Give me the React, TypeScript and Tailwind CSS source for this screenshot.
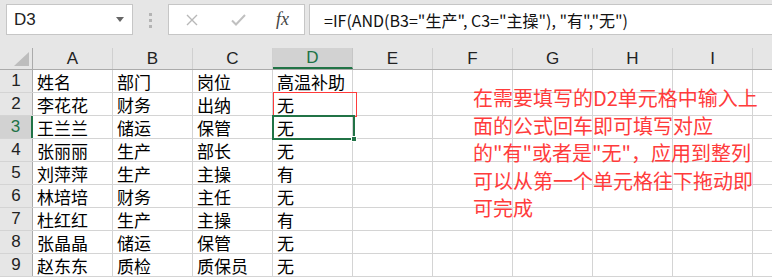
const cols = ["A", "B", "C", "D", "E", "F", "G", "H", "I", ""];

const rows: string[][] = [
  ["姓名", "部门", "岗位", "高温补助"],
  ["李花花", "财务", "出纳", "无"],
  ["王兰兰", "储运", "保管", "无"],
  ["张丽丽", "生产", "部长", "无"],
  ["刘萍萍", "生产", "主操", "有"],
  ["林培培", "财务", "主任", "无"],
  ["杜红红", "生产", "主操", "有"],
  ["张晶晶", "储运", "保管", "无"],
  ["赵东东", "质检", "质保员", "无"],
];

const note = [
  "在需要填写的D2单元格中输入上",
  "面的公式回车即可填写对应",
  "的\"有\"或者是\"无\"，应用到整列",
  "可以从第一个单元格往下拖动即",
  "可完成",
];

const cjk = "font-['Noto_Sans_CJK_SC','Noto_Sans',sans-serif]";

function TopBar() {
  return (
    <div className="flex h-[48px] items-start bg-[#e6e6e6] pt-[4px]">
      <div className="ml-[6px] flex h-[31px] w-[127px] items-center justify-between border border-[#c6c6c6] bg-white pl-[7px] pr-[8px]">
        <span className="font-['Liberation_Sans',sans-serif] text-[17px] text-[#222]">D3</span>
        <svg width="8" height="5" viewBox="0 0 8 5">
          <path d="M0 0h8L4 5z" fill="#666" />
        </svg>
      </div>
      <div className="ml-[16px] mt-[9px] flex flex-col gap-[3px]">
        <div className="h-[3px] w-[3px] bg-[#b4b4b4]" />
        <div className="h-[3px] w-[3px] bg-[#b4b4b4]" />
        <div className="h-[3px] w-[3px] bg-[#b4b4b4]" />
      </div>
      <div className="ml-[16px] flex h-[31px] w-[137px] items-center border border-[#c6c6c6] bg-white">
        <svg className="ml-[17px]" width="12" height="12" viewBox="0 0 12 12">
          <path d="M1 1l10 10M11 1L1 11" stroke="#b8b8b8" strokeWidth="1.4" fill="none" />
        </svg>
        <svg className="ml-[33px]" width="15" height="12" viewBox="0 0 15 12">
          <path d="M1 6.5l4 4L14 1" stroke="#c0c0c0" strokeWidth="2" fill="none" />
        </svg>
        <span className="ml-[30px] font-['Liberation_Serif',serif] text-[18px] italic text-[#444]">fx</span>
      </div>
      <div className="ml-[4px] flex h-[31px] flex-1 items-center border border-r-0 border-[#c6c6c6] bg-white pl-[14px]">
        <span className={`${cjk} text-[16px] text-[#111]`}>
          =IF(AND(B3="生产", C3="主操"), "有","无")
        </span>
      </div>
    </div>
  );
}

function HeaderRow() {
  return (
    <div className="flex h-[22px] border-b border-[#ababab] bg-[#e6e6e6]">
      <div className="relative w-[33px] shrink-0 border-r border-[#ababab]">
        <svg className="absolute bottom-[3px] right-[3px]" width="15" height="14" viewBox="0 0 15 14">
          <path d="M15 0V14H0z" fill="#bdbdbd" />
        </svg>
      </div>
      {cols.map((c, i) =>
        c === "D" ? (
          <div
            key={i}
            className="flex w-[80px] shrink-0 items-center justify-center border-r border-b-2 border-r-[#c6c6c6] border-b-[#217346] bg-[#d2d2d2] font-['Liberation_Sans',sans-serif] text-[17px] text-[#217346]"
          >
            {c}
          </div>
        ) : (
          <div
            key={i}
            className="flex w-[80px] shrink-0 items-center justify-center border-r border-[#d0d0d0] font-['Liberation_Sans',sans-serif] text-[17px] text-[#222]"
          >
            {c}
          </div>
        )
      )}
    </div>
  );
}

function Row({ n, cells }: { n: number; cells: string[] }) {
  const active = n === 3;
  return (
    <div className="flex h-[23px] border-b border-[#d4d4d4]">
      <div
        className={
          active
            ? "flex w-[33px] shrink-0 items-center justify-center border-r-2 border-[#217346] bg-[#d2d2d2] font-['Liberation_Sans',sans-serif] text-[17px] text-[#217346]"
            : "flex w-[33px] shrink-0 items-center justify-center border-r border-[#ababab] bg-[#e6e6e6] font-['Liberation_Sans',sans-serif] text-[17px] text-[#222]"
        }
      >
        {n}
      </div>
      {cols.map((_, i) => (
        <div
          key={i}
          className={`flex w-[80px] shrink-0 items-center whitespace-nowrap border-r border-[#d4d4d4] pl-[4px] pt-[1px] ${cjk} text-[17px] leading-none text-black`}
        >
          {cells[i] ?? ""}
        </div>
      ))}
    </div>
  );
}

export default function App() {
  return (
    <div className="relative h-[278px] w-[772px] overflow-hidden bg-white">
      <TopBar />
      <div className="relative">
        <HeaderRow />
        {rows.map((r, i) => (
          <Row key={i} n={i + 1} cells={r} />
        ))}

        {/* red annotation box around D2 */}
        <div className="absolute left-[273px] top-[44px] h-[25px] w-[84px] border border-[#ff3b3b]" />

        {/* active cell D3 */}
        <div className="absolute left-[272px] top-[67px] h-[25px] w-[83px] border-2 border-[#217346]" />
        <div className="absolute left-[351px] top-[88px] h-[6px] w-[6px] border border-white bg-[#217346]" />

        {/* note text */}
        <div className={`absolute left-[473px] top-[36px] ${cjk} text-[20px] leading-[27.5px] text-[#ff3b3b]`}>
          {note.map((l, i) => (
            <div key={i} className="whitespace-nowrap">
              {l}
            </div>
          ))}
        </div>
      </div>
    </div>
  );
}
